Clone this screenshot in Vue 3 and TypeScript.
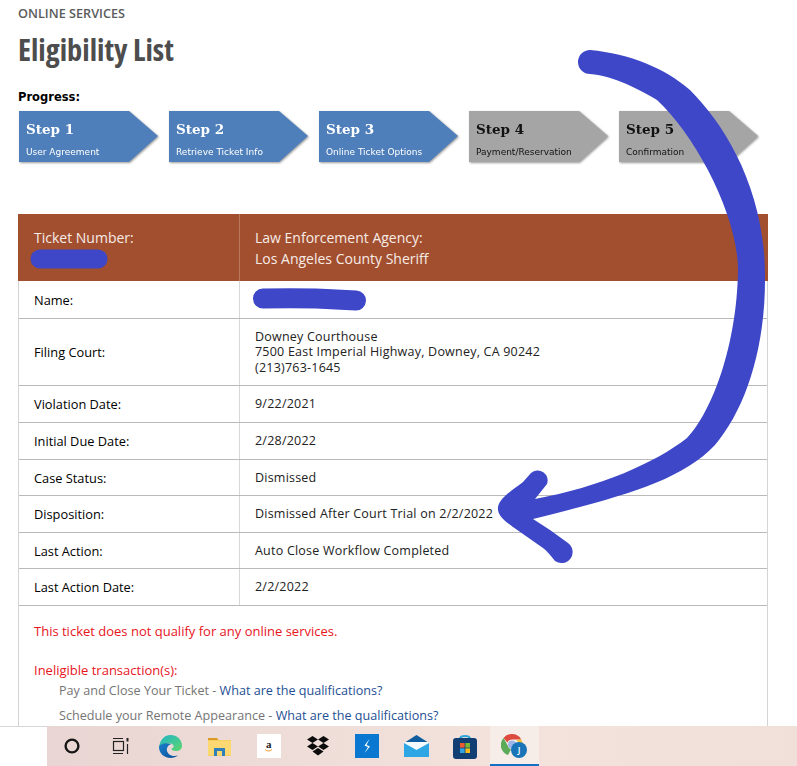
<script setup lang="ts">
interface Step { title: string; sub: string; done: boolean }
interface Row { label: string; lines: string[]; tall?: boolean; short?: boolean; redacted?: boolean; first?: boolean }

const steps: Step[] = [
  { title: 'Step 1', sub: 'User Agreement', done: true },
  { title: 'Step 2', sub: 'Retrieve Ticket Info', done: true },
  { title: 'Step 3', sub: 'Online Ticket Options', done: true },
  { title: 'Step 4', sub: 'Payment/Reservation', done: false },
  { title: 'Step 5', sub: 'Confirmation', done: false },
]

const rows: Row[] = [
  { label: 'Name:', lines: [], redacted: true, first: true },
  { label: 'Filing Court:', lines: ['Downey Courthouse', '7500 East Imperial Highway, Downey, CA 90242', '(213)763-1645'], tall: true },
  { label: 'Violation Date:', lines: ['9/22/2021'] },
  { label: 'Initial Due Date:', lines: ['2/28/2022'] },
  { label: 'Case Status:', lines: ['Dismissed'], short: true },
  { label: 'Disposition:', lines: ['Dismissed After Court Trial on 2/2/2022'] },
  { label: 'Last Action:', lines: ['Auto Close Workflow Completed'], short: true },
  { label: 'Last Action Date:', lines: ['2/2/2022'] },
]

const ineligible: { name: string }[] = [
  { name: 'Pay and Close Your Ticket' },
  { name: 'Schedule your Remote Appearance' },
]
</script>

<template>
  <div class="screen">
    <main class="page">
      <p class="eyebrow">ONLINE SERVICES</p>
      <h1 class="title">Eligibility List</h1>
      <p class="progress-label">Progress:</p>
      <ol class="steps">
        <li v-for="s in steps" :key="s.title" class="step-wrap">
          <div class="step" :class="{ todo: !s.done }">
            <span class="step-title">{{ s.title }}</span>
            <span class="step-sub">{{ s.sub }}</span>
          </div>
        </li>
      </ol>

      <section class="panel">
        <div class="head">
          <div class="head-a">
            <div>Ticket Number:</div>
            <svg class="blob-a" width="79" height="21" viewBox="0 0 79 21"><path d="M10 10H68" stroke="#3d47c8" stroke-width="19" stroke-linecap="round" /></svg>
          </div>
          <div class="head-b">
            <div>Law Enforcement Agency:</div>
            <div>Los Angeles County Sheriff</div>
          </div>
        </div>
        <div v-for="r in rows" :key="r.label" class="row" :class="{ tall: r.tall, short: r.short, first: r.first }">
          <div class="label">{{ r.label }}</div>
          <div class="value">
            <svg v-if="r.redacted" class="blob-b" width="116" height="24" viewBox="0 0 116 24"><path d="M11 10.5C40 10 70 10.5 84 11.5L104 12.5" fill="none" stroke="#3d47c8" stroke-width="20" stroke-linecap="round" /></svg>
            <div v-for="l in r.lines" :key="l">{{ l }}</div>
          </div>
        </div>
        <div class="notes">
          <p class="red first">This ticket does not qualify for any online services.</p>
          <p class="red second">Ineligible transaction(s):</p>
          <p v-for="t in ineligible" :key="t.name" class="txn">{{ t.name }} - <a class="link">What are the qualifications?</a></p>
        </div>
      </section>

      <svg class="arrow" width="797" height="726" viewBox="0 0 797 726" aria-hidden="true">
        <path fill="#3d47c8" d="M590 50C630 54 665 68 690 90C725 125 766 190 765 280C765 350 745 410 715 445C680 482 620 497 533 519L550 530L568 543A11 11 0 0 1 555 561C551 556 547 551 543 548L513 527C503 520 497 514 498 507C500 498 510 492 523 482L531 473A10 10 0 0 1 547 484L535 499C600 487 655 463 687 438C712 412 737 345 738 270C738 215 695 135 657 100C640 90 615 76 590 74A12 12 0 0 1 590 50Z" />
      </svg>
    </main>

    <footer class="taskbar">
      <div class="search"></div>
      <div class="icons">
        <span class="tb">
          <svg width="18" height="18" viewBox="0 0 18 18"><circle cx="9" cy="9" r="6.4" fill="none" stroke="#161616" stroke-width="2.4" /></svg>
        </span>
        <span class="tb">
          <svg width="20" height="18" viewBox="0 0 20 18" fill="none" stroke="#222" stroke-width="1.2"><path d="M2 1.5H12M2 16.5H12" /><rect x="2.5" y="4.5" width="10" height="9" /><path d="M16.5 1V4.5" stroke-width="2" /><path d="M16.5 7V17" /></svg>
        </span>
        <span class="tb">
          <svg width="25" height="25" viewBox="0 0 25 25">
            <defs>
              <linearGradient id="edgeA" x1="0" y1="0" x2="1" y2="1"><stop offset="0" stop-color="#1fb5c9" /><stop offset="1" stop-color="#5ed66c" /></linearGradient>
              <linearGradient id="edgeB" x1="0" y1="0" x2="1" y2="1"><stop offset="0" stop-color="#1a7fc9" /><stop offset="1" stop-color="#0b4f9c" /></linearGradient>
            </defs>
            <path d="M12.5 1C19 1 24 5.5 24 12C24 15 21.5 17 18 17C15 17 13 16 13.5 14.5C15 14 16 13 15.5 11.5C14.5 9 10.5 8.5 7.5 10C4 12 2 14 1 15C1 7 6 1 12.5 1Z" fill="url(#edgeA)" />
            <path d="M1 13C1 20 7 24 12.5 24C15.5 24 18 23 20 21.5C15 23 10 21 9 17C8.3 14 10 11 13.5 10C9 8.5 2 9 1 13Z" fill="url(#edgeB)" />
          </svg>
        </span>
        <span class="tb">
          <svg width="23" height="19" viewBox="0 0 23 19">
            <path d="M0 1H9L11 3H23V19H0Z" fill="#f6cd60" />
            <path d="M0 1H9L10 3H0Z" fill="#d99a28" />
            <path d="M0 4H23V18H0Z" fill="#fbd872" />
            <path d="M6 11H17V19H14V14H9V19H6Z" fill="#2f7fb8" />
          </svg>
        </span>
        <span class="tb">
          <span class="amazon">a<svg width="9" height="3" viewBox="0 0 9 3"><path d="M1 .5C3 2.5 6 2.5 8 .7" fill="none" stroke="#e89a2c" stroke-width="1" /></svg></span>
        </span>
        <span class="tb">
          <svg width="24" height="20" viewBox="0 0 24 20" fill="#0c0c0c">
            <path d="M6.5 0L12 3.5L6.5 7L1 3.5Z" /><path d="M17.5 0L23 3.5L17.5 7L12 3.5Z" />
            <path d="M6.5 7L12 10.5L6.5 14L1 10.5Z" /><path d="M17.5 7L23 10.5L17.5 14L12 10.5Z" />
            <path d="M12 12L17.5 15.5L12 19.5L6.5 15.5Z" />
          </svg>
        </span>
        <span class="tb">
          <svg width="24" height="24" viewBox="0 0 24 24">
            <rect width="24" height="24" fill="#0a78d0" />
            <path d="M14.5 5L9.5 11.5L13 13L9.5 19L15 12.5L11.5 11Z" fill="#fff" />
          </svg>
        </span>
        <span class="tb">
          <svg width="25" height="22" viewBox="0 0 25 22">
            <path d="M12.5 0L25 8V10H0V8Z" fill="#0f5c9e" />
            <path d="M0 8H25V22H0Z" fill="#2fa6e4" />
            <path d="M0 8L12.5 15L25 8V7H0Z" fill="#f4fafd" />
          </svg>
        </span>
        <span class="tb">
          <svg width="24" height="25" viewBox="0 0 24 25">
            <path d="M7 5C7 1 17 1 17 5" fill="none" stroke="#2fa6d8" stroke-width="2" />
            <rect y="4" width="24" height="21" rx="3" fill="#123f73" />
            <rect x="7" y="9" width="4.6" height="4.6" fill="#ef5a30" />
            <rect x="12.4" y="9" width="4.6" height="4.6" fill="#7cb932" />
            <rect x="7" y="14.4" width="4.6" height="4.6" fill="#2ea3e6" />
            <rect x="12.4" y="14.4" width="4.6" height="4.6" fill="#f8bb1c" />
          </svg>
        </span>
        <span class="tb active">
          <svg width="27" height="26" viewBox="0 0 27 26">
            <path d="M11 1A10.5 10.5 0 0 1 20.3 6.5H11A5 5 0 0 0 6.4 9.6L2.5 5A10.5 10.5 0 0 1 11 1Z" fill="#dd4b3e" />
            <path d="M2.5 5L7 13A4.5 4.5 0 0 0 10 16.5L7 22A10.5 10.5 0 0 1 2.5 5Z" fill="#5cab5a" />
            <path d="M20.3 6.5A10.5 10.5 0 0 1 11 22L15 15A5 5 0 0 0 15.5 7Z" fill="#f4c534" />
            <circle cx="11" cy="11.5" r="4" fill="#9db8e8" />
            <circle cx="18" cy="17" r="8" fill="#1a74b8" />
            <text x="18" y="20.4" text-anchor="middle" class="jay">J</text>
          </svg>
        </span>
      </div>
    </footer>
  </div>
</template>

<style>
html, body { margin: 0; background: #fff; }
</style>

<style scoped>
.screen {
  width: 797px;
  height: 766px;
  display: flex;
  flex-direction: column;
  overflow: hidden;
  font-family: "Open Sans", "Liberation Sans", sans-serif;
  color: #222;
}
.page {
  position: relative;
  flex: 1;
  min-height: 0;
  overflow: hidden;
  padding: 5px 0 0 18px;
}
.eyebrow {
  margin: 0;
  font-size: 12.7px;
  line-height: 16px;
  font-weight: 600;
  color: #5b5b5b;
}
.title {
  margin: 9px 0 0;
  font-size: 30.4px;
  line-height: 40px;
  font-weight: 700;
  font-stretch: 75%;
  color: #4d4d4d;
}
.progress-label {
  margin: 20px 0 0;
  font-family: "DejaVu Sans", sans-serif;
  font-size: 11.5px;
  line-height: 14px;
  font-weight: 700;
  color: #000;
}
.steps {
  list-style: none;
  margin: 7px 0 0 1px;
  padding: 0;
  display: flex;
  gap: 11px;
}
.step-wrap {
  filter: drop-shadow(1px 1.5px 1px rgba(0, 0, 0, .4));
}
.step {
  width: 139px;
  height: 51px;
  box-sizing: border-box;
  padding: 10px 0 0 7px;
  display: flex;
  flex-direction: column;
  background: #4e7fbb;
  color: #fff;
  clip-path: polygon(0 0, 110px 0, 139px 25px, 110px 51px, 0 51px);
}
.step.todo {
  background: #a5a5a5;
  color: #111;
}
.step-title {
  font-family: "DejaVu Serif", serif;
  font-size: 13.5px;
  line-height: 16px;
  font-weight: 700;
}
.step-sub {
  margin-top: 9px;
  font-family: "DejaVu Sans", sans-serif;
  font-size: 9px;
  line-height: 12px;
}
.panel {
  box-sizing: border-box;
  width: 750px;
  height: 520px;
  margin-top: 52px;
  border-left: 1px solid #d4d4d4;
  border-right: 1px solid #d4d4d4;
}
.head {
  display: grid;
  grid-template-columns: 222px 1fr;
  height: 67px;
  margin: 0 -1px;
  background: #a24f30;
  color: #f7ece6;
  font-size: 14px;
  line-height: 21px;
}
.head-a {
  padding: 13px 0 0 16px;
  border-right: 1px solid #b97a60;
}
.blob-a {
  display: block;
  margin: 1px 0 0 -4px;
}
.head-b {
  padding: 13px 0 0 15px;
}
.row {
  display: grid;
  grid-template-columns: 221px 1fr;
  height: 37px;
  box-sizing: border-box;
  border-bottom: 1px solid #bababa;
  font-size: 12.8px;
  color: #222;
}
.row.first { height: 38px; }
.row.tall { height: 67px; }
.row.short { height: 36px; }
.label {
  display: flex;
  align-items: center;
  padding-left: 15px;
  border-right: 1px solid #d8d8d8;
  font-weight: 500;
  color: #000;
}
.value {
  display: flex;
  flex-direction: column;
  justify-content: center;
  padding-left: 15px;
  font-size: 12.5px;
  line-height: 15.5px;
  letter-spacing: .22px;
}
.blob-b {
  display: block;
  margin-left: -3px;
}
.notes {
  padding: 17px 0 0 15px;
  font-size: 13px;
}
.notes p { margin: 0; }
.red {
  color: #e8141c;
  line-height: 17px;
}
.second { margin-top: 22px !important; }
.txn {
  padding-left: 25px;
  font-size: 12.6px;
  line-height: 17px;
  color: #757575;
  margin-top: 8px !important;
}
.second + .txn { margin-top: 3px !important; }
.link { color: #1e4f94; }
.arrow {
  position: absolute;
  left: 0;
  top: 0;
  pointer-events: none;
}
.taskbar {
  flex: 0 0 40px;
  display: flex;
  background: linear-gradient(90deg, #e8d4d2, #f3e3dc 65%, #f1dfd9);
}
.search {
  width: 47.4px;
  background: #fff;
  border-top: 1px solid #d6d6d6;
  box-sizing: border-box;
}
.icons { display: flex; }
.tb {
  width: 49.2px;
  height: 40px;
  display: flex;
  align-items: center;
  justify-content: center;
  box-sizing: border-box;
}
.tb.active {
  background: #f6ece8;
  border-bottom: 2px solid #1570c4;
  padding-top: 2px;
}
.amazon {
  width: 24px;
  height: 24px;
  background: #fff;
  display: flex;
  flex-direction: column;
  align-items: center;
  justify-content: center;
  font-family: "Liberation Serif", serif;
  font-weight: 700;
  font-size: 11px;
  line-height: 9px;
  color: #222;
}
.jay {
  font-family: "Open Sans", sans-serif;
  font-size: 9px;
  font-weight: 600;
  fill: #fff;
}
</style>
